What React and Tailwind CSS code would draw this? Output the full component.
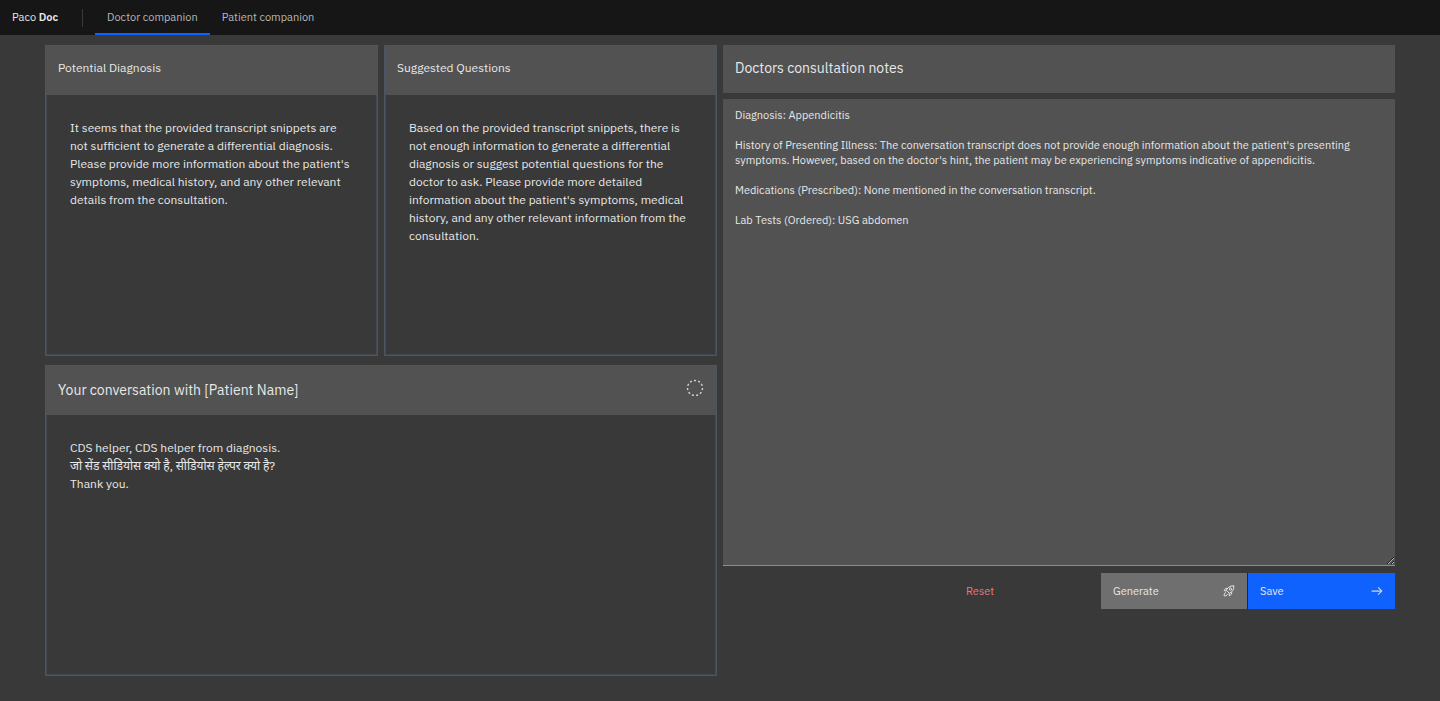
import React, { useState } from 'react';

const tabs = ['Doctor companion', 'Patient companion'];

const defaultNotes = `Diagnosis: Appendicitis

History of Presenting Illness: The conversation transcript does not provide enough information about the patient's presenting symptoms. However, based on the doctor's hint, the patient may be experiencing symptoms indicative of appendicitis.

Medications (Prescribed): None mentioned in the conversation transcript.

Lab Tests (Ordered): USG abdomen`;

const RocketIcon = () => (
  <svg width="12" height="12" viewBox="0 0 32 32" fill="none" stroke="currentColor" strokeWidth="2.6" aria-hidden="true">
    <path d="M9 14C12 6 19 2 29 2c0 10-4 17-12 20z" />
    <path d="M12 9H7l-4 6 6 1M23 19v5l-6 5-1-7" />
    <path d="M8 20c-4 1-5 4-5 9 5 0 8-1 9-5" />
    <circle cx="20" cy="11" r="3" />
  </svg>
);

const ArrowIcon = () => (
  <svg width="12" height="12" viewBox="0 0 16 16" fill="currentColor" aria-hidden="true">
    <path d="M9.3 3.7L13.1 7.5 1 7.5 1 8.5 13.1 8.5 9.3 12.3 10 13 15 8 10 3z" stroke="currentColor" strokeWidth="0.4" />
  </svg>
);

const CircleDashIcon = () => (
  <svg width="18" height="18" viewBox="0 0 18 18" fill="none" stroke="#d0d0d0" aria-hidden="true">
    <circle cx="9" cy="9" r="7.5" strokeWidth="1.4" pathLength="132" strokeDasharray="6 6" />
  </svg>
);

const Card = ({ title, large, action, children }) => (
  <section className="min-h-[311px] border border-[#4b5563] shadow-[inset_0_0_0_1px_#424850]">
    <div className="flex h-[49px] items-center justify-between bg-[#525252] px-3 pb-1.5">
      <h2 className={large ? 'pt-1 text-sm' : 'text-xs'}>{title}</h2>
      {action}
    </div>
    <div className="p-6 text-xs leading-[18px]">{children}</div>
  </section>
);

const App = () => {
  const [tab, setTab] = useState(tabs[0]);
  const [notes, setNotes] = useState(defaultNotes);

  return (
    <div className="min-h-screen bg-[#393939] font-['IBM_Plex_Sans','Roboto','Noto_Sans',sans-serif] text-[#e8e8e8]">
      <header className="flex h-[35px] items-center bg-[#161616] text-[11px]">
        <a href="#" className="px-3">Paco <span className="font-semibold">Doc</span></a>
        <nav className="ml-3 flex h-full items-center">
          <span className="mr-3 h-[18px] w-px bg-[#393939]" />
          {tabs.map((name) => (
            <a
              key={name}
              href="#"
              onClick={() => setTab(name)}
              className={`flex h-full items-center px-3 text-[#b8b8b8] ${tab === name ? 'shadow-[inset_0_-2px_#0f62fe]' : ''}`}
            >
              {name}
            </a>
          ))}
        </nav>
      </header>

      <main className="grid grid-cols-2 gap-1.5 px-[45px] pt-2.5 pb-6">
        <div className="space-y-[9px]">
          <div className="grid grid-cols-2 gap-1.5">
            <Card title="Potential Diagnosis">
              It seems that the provided transcript snippets are not sufficient to generate a differential diagnosis.
              Please provide more information about the patient's symptoms, medical history, and any other relevant
              details from the consultation.
            </Card>
            <Card title="Suggested Questions">
              Based on the provided transcript snippets, there is not enough information to generate a differential
              diagnosis or suggest potential questions for the doctor to ask. Please provide more detailed information
              about the patient's symptoms, medical history, and any other relevant information from the consultation.
            </Card>
          </div>
          <Card
            large
            title="Your conversation with [Patient Name]"
            action={<button type="button" aria-label="Record"><CircleDashIcon /></button>}
          >
            <p>CDS helper, CDS helper from diagnosis.</p>
            <p>जो सेंड सीडियोस क्यो है, सीडियोस हेल्पर क्यो है?</p>
            <p>Thank you.</p>
          </Card>
        </div>

        <div>
          <label htmlFor="notes" className="flex h-12 items-center bg-[#525252] px-3 pb-0.5 text-sm">
            Doctors consultation notes
          </label>
          <textarea
            id="notes"
            value={notes}
            onChange={(e) => setNotes(e.target.value)}
            className="mt-1.5 block h-[467px] w-full resize-y border-b border-[#8d8d8d] bg-[#525252] px-3 py-[9px] text-[11px] leading-[15px] outline-none"
          />
          <div className="mt-[7px] flex justify-end text-[11px]">
            <button type="button" className="h-9 w-[147px] px-3 text-left text-[#e8777c]">Reset</button>
            <button type="button" className="flex h-9 w-[147px] items-center justify-between border-r border-[#262626] bg-[#6f6f6f] px-3">
              Generate
              <RocketIcon />
            </button>
            <button type="button" className="flex h-9 w-[147px] items-center justify-between bg-[#0f62fe] px-3">
              Save
              <ArrowIcon />
            </button>
          </div>
        </div>
      </main>
    </div>
  );
};

export default App;
